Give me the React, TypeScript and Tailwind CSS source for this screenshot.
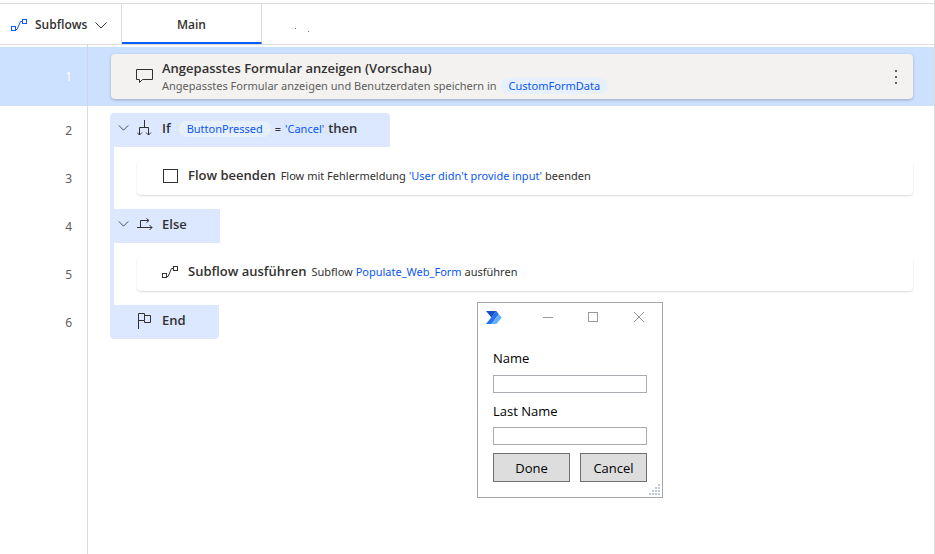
import type { ReactNode } from "react";

type IconProps = { className?: string };

function SubflowIcon({ className = "" }: IconProps) {
  return (
    <svg viewBox="0 0 17 14" className={`h-[14px] w-[17px] shrink-0 ${className}`} fill="none" stroke="currentColor" aria-hidden="true">
      <rect x="0.5" y="8.5" width="4" height="4" />
      <rect x="11.5" y="1.5" width="4" height="4" />
      <path d="M4.500 11.500h1.500L9.500 3.500h2" />
    </svg>
  );
}

function ChevronIcon({ className = "" }: IconProps) {
  return (
    <svg viewBox="0 0 12 7" className={`shrink-0 ${className}`} fill="none" stroke="currentColor" aria-hidden="true">
      <path d="M0.500 0.500 6 6l5.500-5.500" />
    </svg>
  );
}

function CommentIcon() {
  return (
    <svg viewBox="0 0 17 15" className="h-[15px] w-[17px] shrink-0" fill="none" stroke="currentColor" aria-hidden="true">
      <path d="M0.500 0.500h16v10H6.500L3.500 13.500v-3h-3z" />
    </svg>
  );
}

function BranchIcon() {
  return (
    <svg viewBox="0 0 15 16" className="h-4 w-[15px] shrink-0" fill="none" stroke="currentColor" aria-hidden="true">
      <path d="M7.500 0v7.500M2.500 15V7.500h9V15M0 12.500l2.500 2.500 2.500-2.500M9 12.500l2.500 2.500 2.500-2.500" />
    </svg>
  );
}

function ElseIcon() {
  return (
    <svg viewBox="0 0 16 13" className="h-[13px] w-4 shrink-0" fill="none" stroke="currentColor" aria-hidden="true">
      <path d="M0 9.500h15M3.500 9.500v-7h8M9.500 0.500l2.500 2-2.500 2M12.500 7l2.500 2.500-2.500 2.500" />
    </svg>
  );
}

function FlagIcon() {
  return (
    <svg viewBox="0 0 15 17" className="h-[17px] w-[15px] shrink-0" fill="none" stroke="currentColor" aria-hidden="true">
      <path d="M1.500 17V1.500h6v7h-6M7.500 3.500h6v7h-6v-2" />
    </svg>
  );
}

function StopIcon() {
  return (
    <svg viewBox="0 0 17 15" className="h-[15px] w-[17px] shrink-0" fill="none" stroke="currentColor" aria-hidden="true">
      <rect x="1.500" y="0.500" width="14" height="13" />
    </svg>
  );
}

function AutomateLogo() {
  return (
    <svg viewBox="0 0 16 13" className="h-[13px] w-4" aria-hidden="true">
      <path d="M0 0h10.500L5.500 6.500z" fill="#1450c4" />
      <path d="M10.500 0 0 13h5.500l7.500-9.800z" fill="#2672ec" />
      <path d="M13 3.200 5.500 13h5L16 6.500z" fill="#61b0fc" />
    </svg>
  );
}

function Variable({ children }: { children: ReactNode }) {
  return <span className="inline-block h-4 rounded-full bg-[#e6f0ff] px-2 leading-4 text-[#0c57f0]">{children}</span>;
}

function Title({ children }: { children: ReactNode }) {
  return <strong className="font-['Open_Sans',sans-serif] text-[13px] font-semibold">{children}</strong>;
}

function Line({ number, children }: { number: number; children: ReactNode }) {
  return (
    <li className="flex h-12">
      <div className="flex w-[88px] shrink-0 items-center justify-end border-r border-[#dcdcdc] pt-[2px] pr-[15px] text-xs text-[#605e5c]">{number}</div>
      <div className="flex min-w-0 flex-1 pr-[21px] pl-[22px]">{children}</div>
    </li>
  );
}

function NestedAction({ number, icon, title, children }: { number: number; icon: ReactNode; title: string; children: ReactNode }) {
  return (
    <Line number={number}>
      <div className="w-1 shrink-0 bg-[#dbe8ff]" />
      <div className="mt-[6px] ml-[23px] flex h-[35px] flex-1 items-center rounded-sm bg-white pb-[3px] pl-[25px] whitespace-nowrap shadow-[0_1px_2px_rgba(0,0,0,0.14)]">
        {icon}
        <p className="ml-[9px] flex items-baseline gap-[5px]">
          <Title>{title}</Title>
          <span>{children}</span>
        </p>
      </div>
    </Line>
  );
}

export default function App() {
  return (
    <div className="relative flex min-h-screen flex-col border-r border-[#dcdcdc] bg-white pt-[3px] font-['Noto_Sans','Open_Sans',sans-serif] text-[11px] text-[#323130]">
      <header className="flex h-[42px] border-y border-[#dcdcdc] font-['Open_Sans',sans-serif] text-xs">
        <button type="button" className="flex w-[122px] items-center border-r border-[#dcdcdc] pt-[2px] pl-[11px] font-semibold">
          <SubflowIcon className="text-[#0a5cff]" />
          <span className="ml-[7px]">Subflows</span>
          <ChevronIcon className="mr-[14px] ml-auto h-[7px] w-3" />
        </button>
        <button type="button" className="w-[140px] border-r border-b-2 border-r-[#dcdcdc] border-b-[#0a5cff] pt-[3px] font-semibold">
          Main
        </button>
        <span className="flex gap-3 pt-6 pl-[33px]" aria-hidden="true">
          <i className="size-px bg-[#777777]" />
          <i className="mt-[3px] size-px bg-[#a07050]" />
        </span>
      </header>

      <ol className="flex flex-col">
        <li className="flex">
          <div className="flex w-[88px] shrink-0 border-r border-[#d0d5de] pt-[2px]">
            <span className="flex flex-1 items-center justify-end bg-[#cce0ff] pr-[15px] text-xs text-white">1</span>
          </div>
          <div className="mt-[2px] flex-1 bg-[#cce0ff] py-[7px] pr-[21px] pl-[23px]">
            <div className="flex h-[45px] items-center rounded-sm bg-[#f3f2f1] pr-[9px] pl-[25px] whitespace-nowrap shadow-[0_1px_3px_rgba(0,0,0,0.25)]">
              <CommentIcon />
              <div className="ml-[9px] flex-1">
                <h2 className="leading-[18px]">
                  <Title>Angepasstes Formular anzeigen (Vorschau)</Title>
                </h2>
                <p className="flex gap-1 leading-4 text-[#605e5c]">
                  <span>Angepasstes Formular anzeigen und Benutzerdaten speichern in</span>
                  <Variable>CustomFormData</Variable>
                </p>
              </div>
              <button type="button" aria-label="Mehr" className="flex h-6 w-4 flex-col items-center justify-center gap-1">
                <i className="size-[2px] bg-[#605e6c]" />
                <i className="size-[2px] bg-[#605e6c]" />
                <i className="size-[2px] bg-[#605e6c]" />
              </button>
            </div>
          </div>
        </li>

        <Line number={2}>
          <div className="mt-[7px] w-1 shrink-0 rounded-tl bg-[#dbe8ff]" />
          <div className="mt-[7px] flex h-[34px] w-[276px] items-center rounded-tr-sm bg-[#dbe8ff] pb-[2px] pl-1 whitespace-nowrap">
            <span className="mr-[10px] flex items-center gap-2 pb-[2px]">
              <ChevronIcon className="h-[6px] w-[11px]" />
              <BranchIcon />
            </span>
            <Title>If</Title>
            <span className="ml-2 flex gap-1">
              <Variable>ButtonPressed</Variable>
              <span>=</span>
              <span className="mr-1 text-[#0c57f0]">'Cancel'</span>
            </span>
            <Title>then</Title>
          </div>
        </Line>

        <NestedAction number={3} icon={<StopIcon />} title="Flow beenden">
          Flow mit Fehlermeldung <span className="text-[#0c57f0]">'User didn't provide input'</span> beenden
        </NestedAction>

        <Line number={4}>
          <div className="w-1 shrink-0 bg-[#dbe8ff]" />
          <div className="mt-[7px] flex h-[34px] w-[106px] items-center bg-[#dbe8ff] pb-[2px] pl-1">
            <span className="mr-[9px] flex items-center gap-2 pb-[2px]">
              <ChevronIcon className="h-[6px] w-[11px]" />
              <ElseIcon />
            </span>
            <Title>Else</Title>
          </div>
        </Line>

        <NestedAction number={5} icon={<SubflowIcon />} title="Subflow ausführen">
          Subflow <span className="text-[#0c57f0]">Populate_Web_Form</span> ausführen
        </NestedAction>

        <Line number={6}>
          <div className="mb-[7px] w-1 shrink-0 rounded-bl bg-[#dbe8ff]" />
          <div className="mt-[7px] flex h-[34px] w-[105px] items-center rounded-br-sm bg-[#dbe8ff] pb-[2px] pl-[23px]">
            <span className="mr-[10px] flex pb-[2px]">
              <FlagIcon />
            </span>
            <Title>End</Title>
          </div>
        </Line>
      </ol>
      <div className="w-[88px] flex-1 border-r border-[#dcdcdc]" />

      <form className="absolute top-[302px] left-[477px] w-[186px] border border-[#a6a6a6] bg-white px-[15px] pb-[15px] font-['Open_Sans',sans-serif] text-[13px] text-black">
        <div className="-ml-[7px] flex h-7 items-center text-[#999999]">
          <AutomateLogo />
          <button type="button" aria-label="Minimieren" className="ml-[38px] flex size-4 items-center justify-center">
            <svg viewBox="0 0 10 10" className="size-[10px]" stroke="currentColor">
              <path d="M0 5.500h10" />
            </svg>
          </button>
          <button type="button" aria-label="Maximieren" className="ml-[30px] flex size-4 items-center justify-center">
            <svg viewBox="0 0 10 10" className="size-[10px]" fill="none" stroke="currentColor">
              <rect x="0.500" y="0.500" width="9" height="9" />
            </svg>
          </button>
          <button type="button" aria-label="Schließen" className="ml-[30px] flex size-4 items-center justify-center">
            <svg viewBox="0 0 10 10" className="size-[10px]" stroke="currentColor">
              <path d="M0 0l10 10M10 0L0 10" />
            </svg>
          </button>
        </div>
        <label htmlFor="first" className="mt-[18px] block leading-[18px]">Name</label>
        <input id="first" type="text" className="mt-2 block h-[18px] w-full border border-[#abadb3] px-1 text-xs" />
        <label htmlFor="last" className="mt-[9px] block leading-[18px]">Last Name</label>
        <input id="last" type="text" className="mt-[7px] block h-[18px] w-full border border-[#abadb3] px-1 text-xs" />
        <div className="mt-2 flex gap-[10px]">
          <button type="button" className="h-[29px] w-[77px] border border-[#707070] bg-[#dddddd] pt-[2px]">Done</button>
          <button type="button" className="h-[29px] flex-1 border border-[#707070] bg-[#dddddd] pt-[2px]">Cancel</button>
        </div>
        <svg viewBox="0 0 11 11" className="absolute right-[2px] bottom-[2px] size-[11px]" fill="#c3c9dc" aria-hidden="true">
          <path d="M9 0h2v2H9zM9 3h2v2H9zM9 6h2v2H9zM9 9h2v2H9zM6 3h2v2H6zM6 6h2v2H6zM6 9h2v2H6zM3 6h2v2H3zM3 9h2v2H3zM0 9h2v2H0z" />
        </svg>
      </form>
    </div>
  );
}
